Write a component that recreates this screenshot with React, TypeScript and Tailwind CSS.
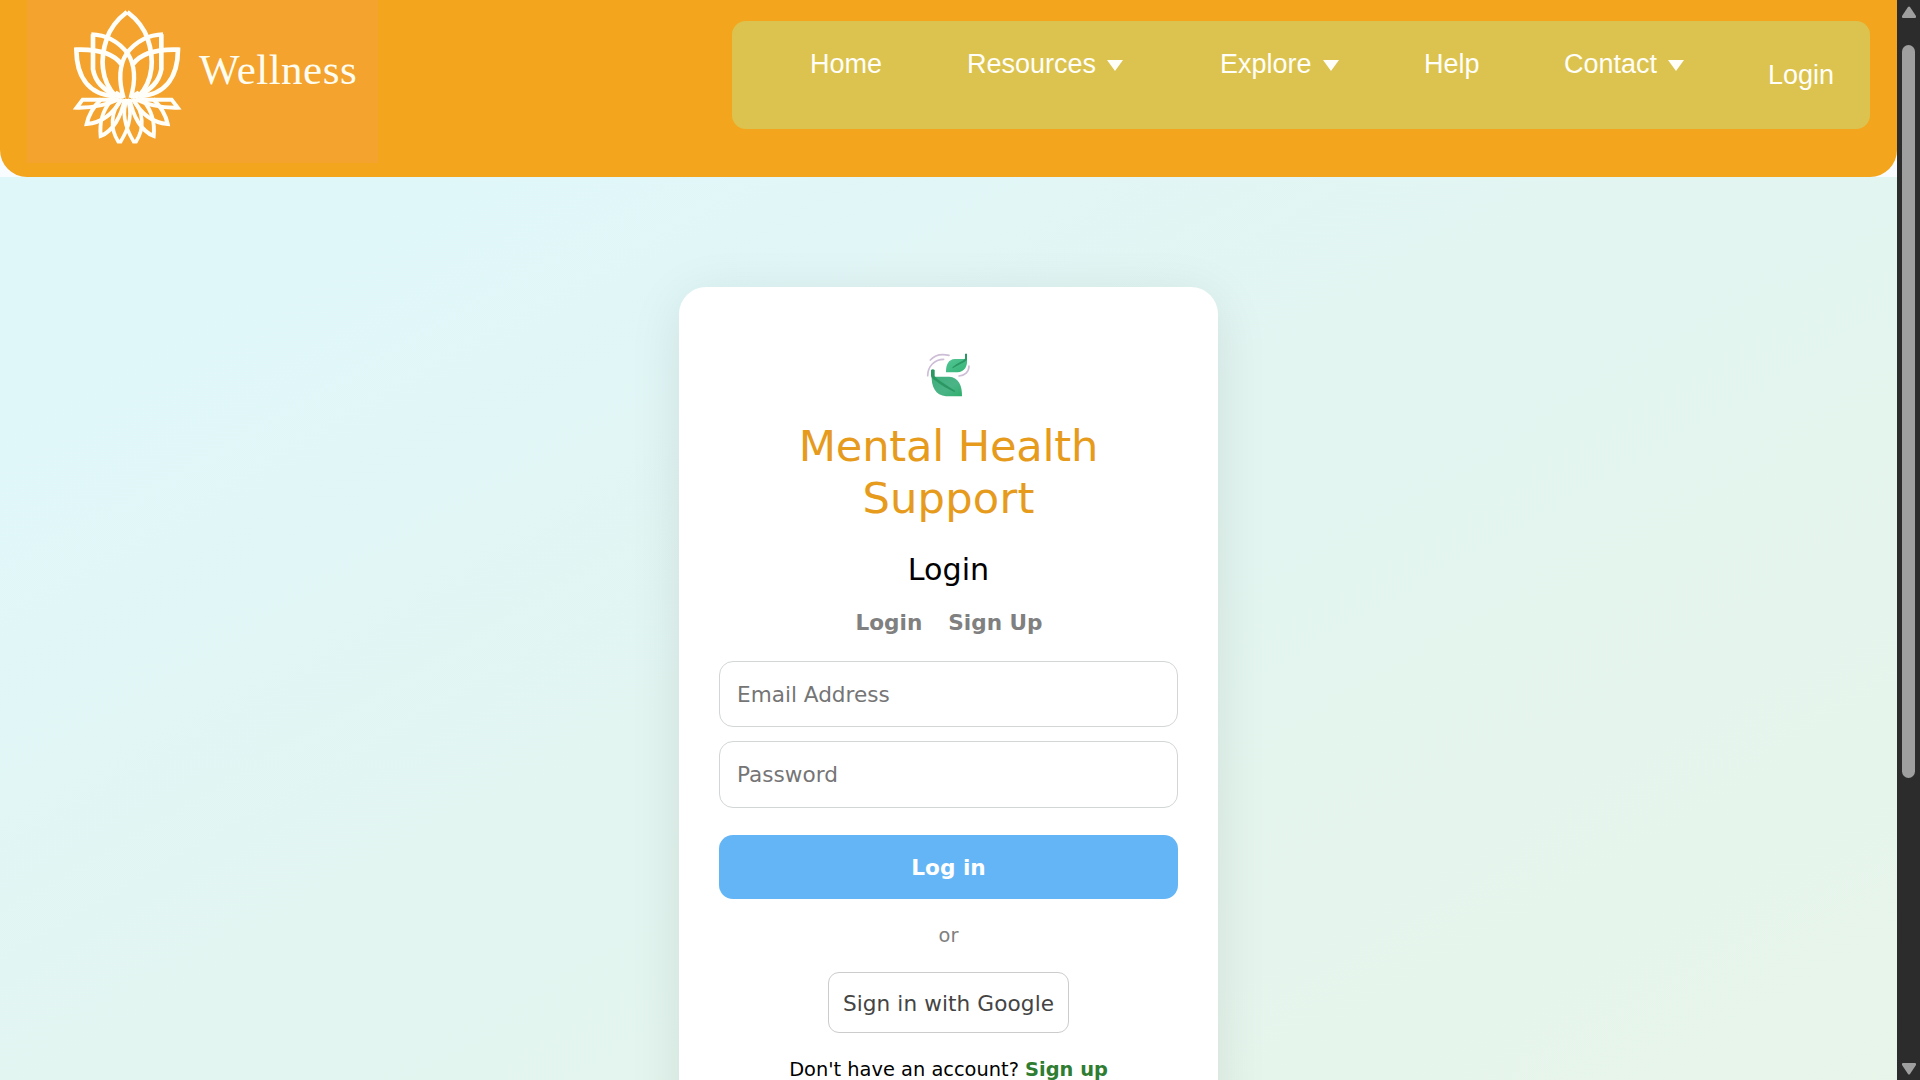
import React from "react";

const petals = (
  <g>
    <path d="M201 36C172 58 150 86 140 117C120 175 122 240 166 288" strokeWidth="14" />
    <path d="M99 103V208C106 246 130 268 168 288" strokeWidth="14" />
    <path d="M94 103C142 104 178 128 203 160C226 196 228 240 212 294" strokeWidth="13" />
    <path d="M184 192C160 160 110 147 49 149C50 222 78 284 166 289" strokeWidth="14" />
    <path d="M170 299H68L50 323C90 324 140 315 178 297" strokeWidth="12" />
    <path d="M124 297C98 322 86 344 80 372C124 368 160 342 184 297" strokeWidth="12" />
    <path d="M154 300C126 334 118 366 122 408C158 394 184 350 194 297" strokeWidth="12" />
    <path d="M186 297C150 336 150 386 175 425H182C208 382 218 336 202 297" strokeWidth="11" />
    <path d="M150 292L190 296V284L170 272Z" fill="#fffef8" stroke="none" />
  </g>
);

function Lotus() {
  return (
    <svg viewBox="0 0 405 465" className="h-[155px] w-[135px] shrink-0" fill="none" stroke="#fffef8">
      {petals}
      <g transform="translate(403 0) scale(-1 1)">{petals}</g>
    </svg>
  );
}

function Leaves() {
  return (
    <svg viewBox="78 64 134 138" className="h-[46px] w-[44.7px]" fill="none">
      <defs>
        <linearGradient id="leafA" x1="0" y1="0" x2="1" y2="1">
          <stop offset="0" stopColor="#3fae7c" />
          <stop offset="0.6" stopColor="#4bb487" />
          <stop offset="1" stopColor="#2fae6b" />
        </linearGradient>
        <linearGradient id="leafB" x1="0" y1="0" x2="1" y2="1">
          <stop offset="0" stopColor="#52c795" />
          <stop offset="1" stopColor="#37b377" />
        </linearGradient>
      </defs>
      <g stroke="#cdbdd6" strokeWidth="5" strokeLinecap="round">
        <path d="M91 88C105 72 126 69 147 74" />
        <path d="M83 135C83 107 104 86 131 86" />
        <path d="M207 106C207 124 194 135 177 136" />
      </g>
      <path d="M95 132L104 138H148C174 140 187 162 186 197H138C106 193 93 168 95 132Z" fill="url(#leafA)" />
      <path d="M93 118Q98 114 104 118V137Q112 147 126 155L166 181L163 184Q130 169 108 151Q94 144 93 136Z" fill="#2c9763" />
      <path d="M201 85H164C146 86 137 102 138 125H172C194 124 203 106 201 85Z" fill="url(#leafB)" />
      <path d="M195 69H201V88Q192 96 180 101L158 113L157 110Q172 97 188 90Q195 87 195 83Z" fill="#2c9763" />
    </svg>
  );
}

function Caret() {
  return (
    <svg viewBox="0 0 16 11" className="mt-[3px] ml-[11px] h-[11px] w-[16px]" fill="#fffef8">
      <path d="M0 0H16L8 11Z" />
    </svg>
  );
}

function NavItem({ label, caret, className }: { label: string; caret?: boolean; className: string }) {
  return (
    <a className={"flex items-center whitespace-nowrap " + className}>
      {label}
      {caret && <Caret />}
    </a>
  );
}

function Scrollbar() {
  return (
    <div className="flex w-[23px] shrink-0 flex-col items-center bg-[#2c2c2c]">
      <svg viewBox="0 0 16 12" className="mt-[6px] h-[12px] w-[16px]" fill="#9f9f9f">
        <path d="M7 1Q8 0 9 1L15 10Q15.500 12 14 12H2Q.5 12 1 10Z" />
      </svg>
      <div className="mt-[27px] h-[733px] w-[13px] rounded-full bg-[#9f9f9f]" />
      <svg viewBox="0 0 16 12" className="mt-auto mb-[5px] h-[12px] w-[16px]" fill="#9f9f9f">
        <path d="M7 11Q8 12 9 11L15 2Q15.500 0 14 0H2Q.5 0 1 2Z" />
      </svg>
    </div>
  );
}

export default function App() {
  return (
    <div className="flex h-[1080px] w-[1920px] overflow-hidden font-['DejaVu_Sans',sans-serif]">
      <div className="flex min-w-0 flex-1 flex-col bg-[#f8fcff]">
        <header className="flex h-[177px] shrink-0 items-start justify-between rounded-b-[27px] bg-[#f3a51d] pr-[27px] pl-[27px]">
          <div className="flex h-[163px] w-[351px] bg-[#f3a32e] pl-[33px]">
            <Lotus />
            <span className="mt-[46px] ml-[4px] font-['Liberation_Serif',serif] text-[43px] leading-[48px] tracking-[0.5px] text-[#fffdf0]">
              Wellness
            </span>
          </div>
          <nav className="mt-[21px] flex h-[108px] w-[1138px] items-start rounded-[14px] bg-[#dcc34f] pt-[27px] pl-[78px] font-['Liberation_Sans',sans-serif] text-[27px] leading-[32px] text-[#fffef8]">
            <NavItem label="Home" className="w-[157px]" />
            <NavItem label="Resources" caret className="w-[253px]" />
            <NavItem label="Explore" caret className="w-[204px]" />
            <NavItem label="Help" className="w-[140px]" />
            <NavItem label="Contact" caret className="w-[204px]" />
            <NavItem label="Login" className="mt-[11px]" />
          </nav>
        </header>
        <main className="flex flex-1 items-start justify-center bg-[linear-gradient(150deg,#e0f7fa_0%,#e0f7fa_12%,#e2f5f1_45%,#e8f5e9_100%)] pt-[110px]">
          <section className="flex h-[860px] w-[539px] shrink-0 flex-col items-center rounded-[27px] bg-white px-[40px] pt-[65px] text-[21.6px] shadow-[0_10px_54px_rgba(0,0,0,0.09)]">
            <Leaves />
            <h1 className="mt-[22px] text-center text-[43.2px] leading-[52px] text-[#e69b1c]">
              <span className="tracking-[-0.2px]">Mental Health</span>
              <br />
              <span className="tracking-[0.2px]">Support</span>
            </h1>
            <h2 className="mt-[28px] text-[30.2px] leading-[36px] text-black">Login</h2>
            <div className="mt-[22px] flex gap-[26px] pl-px leading-[26px] font-bold text-[#808080]">
              <span>Login</span>
              <span>Sign Up</span>
            </div>
            <input
              placeholder="Email Address"
              className="mt-[25px] h-[66px] w-full shrink-0 rounded-[14px] border border-[#d2d6d6] px-[17px] placeholder:text-[#757575]"
            />
            <input
              placeholder="Password"
              className="mt-[14px] h-[67px] w-full shrink-0 rounded-[14px] border border-[#d2d6d6] px-[17px] placeholder:text-[#757575]"
            />
            <button className="mt-[27px] h-[64px] w-full shrink-0 rounded-[14px] bg-[#64b5f6] pt-[2px] font-bold text-white">
              Log in
            </button>
            <p className="mt-[25px] text-[19.4px] leading-[24px] text-[#808080]">or</p>
            <button className="mt-[24px] h-[61px] w-[241px] shrink-0 rounded-[11px] border border-[#cccccc] pt-[3px] tracking-[0.1px] whitespace-nowrap text-[#444444]">
              Sign in with Google
            </button>
            <p className="mt-[25px] text-[19.4px] leading-[24px] whitespace-nowrap text-black">
              Don't have an account? <b className="text-[#2e7d32]">Sign up</b>
            </p>
          </section>
        </main>
      </div>
      <Scrollbar />
    </div>
  );
}
